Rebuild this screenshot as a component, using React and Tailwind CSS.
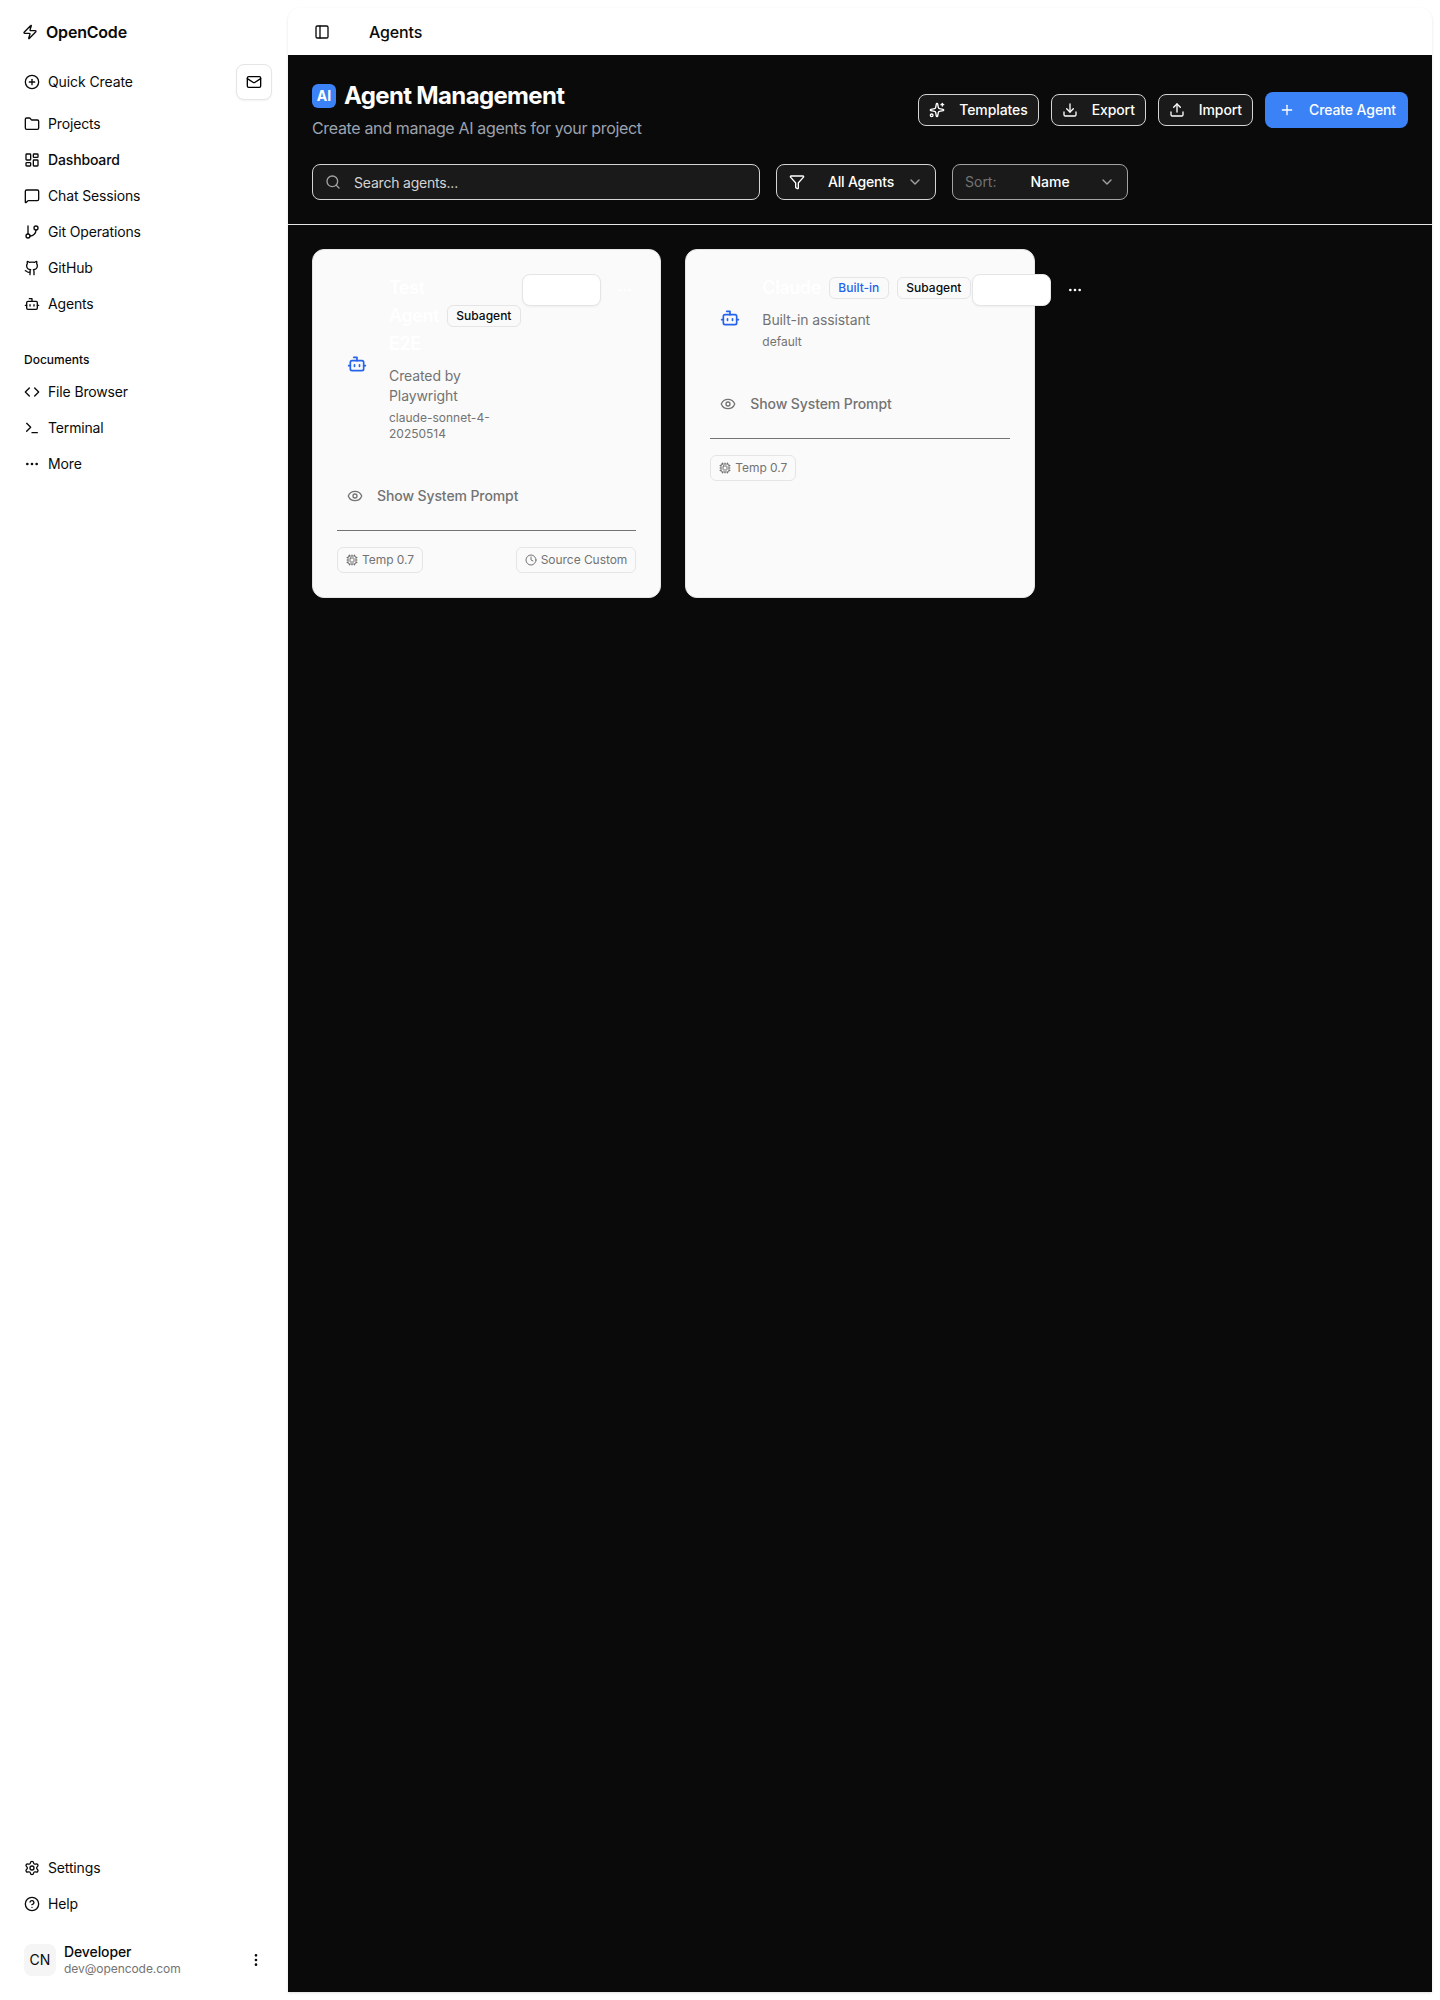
import React from "react";
import {
  Bot,
  ChevronDown,
  CirclePlus,
  CircleHelp,
  Clock,
  Code,
  Cpu,
  Download,
  Ellipsis,
  EllipsisVertical,
  Eye,
  Filter,
  Folder,
  GitBranch,
  Github,
  LayoutDashboard,
  Mail,
  MessageSquare,
  PanelLeft,
  Plus,
  Search,
  Settings,
  Sparkles,
  TerminalIcon,
  Upload,
  Zap,
} from "lucide-react";

const NavItem = ({ icon: Icon, label, medium }) => (
  <a className={`flex h-8 items-center gap-2 px-2 text-sm tracking-[-0.15px] text-[#0a0a0a] ${medium ? "font-medium" : ""}`}>
    <Icon size={16} strokeWidth={2} />
    <span>{label}</span>
  </a>
);

const Sidebar = () => (
  <aside className="flex h-screen w-[288px] shrink-0 flex-col bg-white px-4 pt-4 pb-4">
    {/* Logo */}
    <div className="flex h-8 items-center gap-2 px-[6px] text-base font-semibold tracking-[-0.2px] text-[#0a0a0a]">
      <Zap size={16} strokeWidth={2} />
      <span>OpenCode</span>
    </div>

    {/* Quick create */}
    <div className="mt-4 flex h-9 items-center justify-between pl-2">
      <div className="flex items-center gap-2 text-sm tracking-[-0.1px] text-[#0a0a0a]">
        <CirclePlus size={16} />
        <span>Quick Create</span>
      </div>
      <button className="flex h-9 w-9 items-center justify-center rounded-lg border border-[#e5e5e5] bg-white shadow-xs">
        <Mail size={16} />
      </button>
    </div>

    <nav className="mt-2 flex flex-col gap-1">
      <NavItem icon={Folder} label="Projects" />
      <NavItem icon={LayoutDashboard} label="Dashboard" medium />
      <NavItem icon={MessageSquare} label="Chat Sessions" />
      <NavItem icon={GitBranch} label="Git Operations" />
      <NavItem icon={Github} label="GitHub" />
      <NavItem icon={Bot} label="Agents" />
    </nav>

    {/* Documents */}
    <div className="mt-6 flex h-8 items-center px-2 text-xs font-medium text-[#0a0a0a]">Documents</div>
    <nav className="flex flex-col gap-1">
      <NavItem icon={Code} label="File Browser" />
      <NavItem icon={TerminalIcon} label="Terminal" />
      <NavItem icon={Ellipsis} label="More" />
    </nav>

    <div className="flex-1" />

    <nav className="flex flex-col gap-1">
      <NavItem icon={Settings} label="Settings" />
      <NavItem icon={CircleHelp} label="Help" />
    </nav>

    {/* User */}
    <div className="mt-4 flex h-12 items-center gap-2 px-2">
      <div className="flex h-8 w-8 items-center justify-center rounded-lg bg-[#f5f5f5] text-sm text-[#0a0a0a]">CN</div>
      <div className="flex-1">
        <div className="text-sm leading-[18px] font-medium tracking-[-0.1px] text-[#0a0a0a]">Developer</div>
        <div className="text-xs leading-4 tracking-[-0.05px] text-[#737373]">dev@opencode.com</div>
      </div>
      <EllipsisVertical size={16} className="text-[#0a0a0a]" />
    </div>
  </aside>
);

const HeaderButton = ({ icon: Icon, label }) => (
  <button className="flex h-8 items-center gap-[14px] rounded-lg border border-[#d4d4d4] bg-[#1a1a1a] px-[10px] text-sm font-medium tracking-[-0.1px] text-white">
    <Icon size={16} />
    <span>{label}</span>
  </button>
);

const Tag = ({ icon: Icon, label }) => (
  <span className="flex h-[26px] items-center gap-1 rounded-md border border-[#e5e5e5] px-2 text-xs tracking-[-0.05px] text-[#737373]">
    <Icon size={12} />
    {label}
  </span>
);

const Badge = ({ label, blue }) => (
  <span
    className={`shrink-0 rounded-md border border-[#e5e5e5] px-[8.5px] py-0.5 text-xs font-medium ${
      blue ? "text-[#2563eb]" : "text-[#0a0a0a]"
    }`}
  >
    {label}
  </span>
);

const AgentCard = ({ agent }) => (
  <div className="flex flex-col rounded-xl border border-[#e5e5e5] bg-[#fafafa] p-6">
    <div className="flex w-[354px] items-start">
      <div className={`flex shrink-0 items-center gap-3 ${agent.leftWidth}`}>
        <div className="mb-[2px] flex w-10 shrink-0 justify-center">
          <Bot size={20} className="text-[#2563eb]" />
        </div>
        <div className="min-w-0 flex-1 pb-[14px]">
          <div className="flex items-center gap-2">
            <h3 className={`text-lg leading-7 font-semibold tracking-[-0.45px] text-white ${agent.narrowTitle ? "w-min" : ""}`}>
              {agent.name}
            </h3>
            {agent.builtIn && <Badge label="Built-in" blue />}
            <Badge label="Subagent" />
          </div>
          <p className="mt-2 text-sm tracking-[-0.1px] text-[#737373]">{agent.description}</p>
          <p className="mt-1 text-xs text-[#737373]">{agent.model}</p>
        </div>
      </div>
      <div className="flex shrink-0 items-center gap-2">
        <button className="h-8 w-[79px] rounded-lg border border-[#e5e5e5] bg-white shadow-xs" />
        <button className="flex h-8 w-8 items-center justify-center text-white">
          <Ellipsis size={16} />
        </button>
      </div>
    </div>

    <button className="mt-[22px] flex h-9 items-center gap-[14px] px-2.5 text-sm font-medium tracking-[-0.1px] text-[#737373]">
      <Eye size={16} />
      Show System Prompt
    </button>

    <div className="mt-4 flex justify-between border-t border-[#737373] pt-4">
      <Tag icon={Cpu} label="Temp 0.7" />
      {agent.source && <Tag icon={Clock} label={`Source ${agent.source}`} />}
    </div>
  </div>
);

const agents = [
  {
    name: "Test Agent E2E",
    description: "Created by Playwright",
    model: "claude-sonnet-4-20250514",
    source: "Custom",
    narrowTitle: true,
    leftWidth: "w-[185px]",
  },
  {
    name: "Claude",
    description: "Built-in assistant",
    model: "default",
    builtIn: true,
    leftWidth: "w-[262px]",
  },
];

export default function App() {
  return (
    <div className="flex h-screen overflow-hidden bg-white font-['Inter',sans-serif]">
      <Sidebar />
      <main className="my-2 mr-2 flex flex-1 flex-col overflow-hidden rounded-t-xl bg-white shadow-sm">
        {/* Top bar */}
        <header className="flex h-[47px] items-center gap-[39px] pl-[26px]">
          <PanelLeft size={16} className="text-[#0a0a0a]" />
          <span className="text-base font-medium tracking-[-0.15px] text-[#0a0a0a]">Agents</span>
        </header>

        <div className="flex-1 bg-[#0a0a0a]">
          {/* Page header */}
          <section className="border-b border-[#e5e5e5] px-6 pt-[25px] pb-6">
            <div className="flex items-center justify-between">
              <div>
                <div className="flex items-center gap-2">
                  <span className="flex h-6 w-6 items-center justify-center rounded-md bg-[#3b82f6] text-sm font-bold text-white">
                    AI
                  </span>
                  <h1 className="text-2xl font-bold tracking-[-0.65px] text-white">Agent Management</h1>
                </div>
                <p className="mt-1 text-base tracking-[-0.34px] text-[#9ca3af]">Create and manage AI agents for your project</p>
              </div>
              <div className="flex items-center gap-3">
                <HeaderButton icon={Sparkles} label="Templates" />
                <HeaderButton icon={Download} label="Export" />
                <HeaderButton icon={Upload} label="Import" />
                <button className="flex h-9 items-center gap-[14px] rounded-lg bg-[#3b82f6] pr-3 pl-[14px] text-sm font-medium tracking-[-0.1px] text-white">
                  <Plus size={16} />
                  Create Agent
                </button>
              </div>
            </div>

            {/* Filters */}
            <div className="mt-6 flex items-center gap-4">
              <div className="flex h-9 w-[448px] items-center gap-[13px] rounded-lg border border-[#d4d4d4] bg-[#1a1a1a] px-3">
                <Search size={16} className="text-[#a3a3a3]" />
                <input
                  placeholder="Search agents..."
                  className="flex-1 bg-transparent pt-px text-sm tracking-[-0.2px] text-white outline-none placeholder:text-[#d4d4d4]"
                />
              </div>
              <button className="flex h-9 w-[160px] items-center rounded-lg border border-[#d4d4d4] bg-[#1a1a1a] px-3 text-sm font-medium tracking-[-0.2px] text-white">
                <Filter size={16} />
                <span className="ml-[23px] flex-1 text-left">All Agents</span>
                <ChevronDown size={16} className="text-[#a3a3a3]" />
              </button>
              <button className="flex h-9 w-[176px] items-center rounded-lg border border-[#a3a3a3] bg-[#1a1a1a] px-3 text-sm font-medium text-white">
                <span className="font-normal text-[#737373]">Sort:</span>
                <span className="ml-[34px] flex-1 text-left">Name</span>
                <ChevronDown size={16} className="text-[#a3a3a3]" />
              </button>
            </div>
          </section>

          {/* Agent cards */}
          <section className="grid grid-cols-3 gap-6 p-6">
            {agents.map((agent) => (
              <AgentCard key={agent.name} agent={agent} />
            ))}
          </section>
        </div>
      </main>
    </div>
  );
}
